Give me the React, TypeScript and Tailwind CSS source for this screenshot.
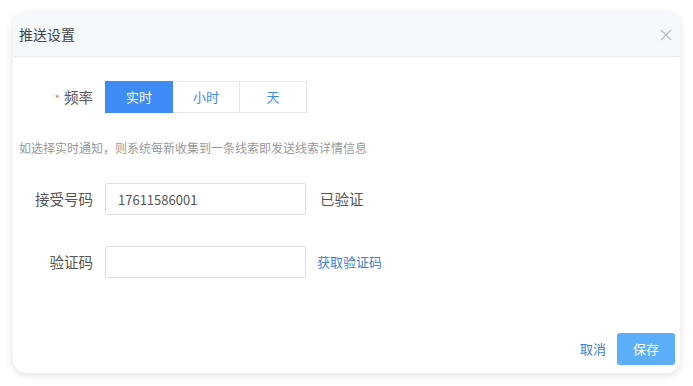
import { useState } from "react";

const FREQS = ["实时", "小时", "天"] as const;

const labelClass = "w-[80px] shrink-0 text-right text-[14.5px] text-[#555]";
const inputClass =
  "h-[32px] w-[201px] rounded-[2px] border border-[#dcdfe6] bg-white px-[12px] text-[13px] text-[#555] outline-none focus:border-[#409eff]";

export default function App() {
  const [freq, setFreq] = useState<string>("实时");
  const [phone, setPhone] = useState("17611586001");
  const [code, setCode] = useState("");

  return (
    <div
      className="h-[386px] w-[693px] bg-white pl-[13px] pt-[13px]"
      style={{ fontFamily: '"Noto Sans CJK SC", "Noto Sans", sans-serif' }}
    >
      <div className="flex h-[360px] w-[667px] flex-col overflow-hidden rounded-[14px] bg-white shadow-[0_2px_10px_rgba(0,0,0,0.12)]">
        {/* header */}
        <div className="flex h-[44px] shrink-0 items-center justify-between border-b border-[#e8ecf0] bg-[#f5f9fc] pl-[6px] pr-[8px]">
          <span className="text-[14px] text-[#444]">推送设置</span>
          <button type="button" className="text-[#b8bcc2]">
            <svg width="12" height="12" viewBox="0 0 12 12" fill="none" stroke="currentColor" strokeWidth="1.2">
              <path d="M1 1L11 11M11 1L1 11" />
            </svg>
          </button>
        </div>

        {/* body */}
        <div className="flex flex-1 flex-col pt-[24px]">
          <div className="flex items-center gap-[12px]">
            <label className={labelClass}>
              <span className="mr-[4px] text-[11px] text-[#f56c6c]">*</span>频率
            </label>
            <div className="flex">
              {FREQS.map((f, i) => (
                <button
                  key={f}
                  type="button"
                  onClick={() => setFreq(f)}
                  className={`h-[32px] w-[68px] border text-[13px] ${i > 0 ? "-ml-px" : ""} ${
                    freq === f
                      ? "relative border-[#3e8bf6] bg-[#3e8bf6] text-white"
                      : "border-[#e4e7ed] bg-white text-[#3e8bf6]"
                  }`}
                >
                  {f}
                </button>
              ))}
            </div>
          </div>

          <p className="mt-[26px] pl-[6px] text-[12px] text-[#999]">
            如选择实时通知，则系统每新收集到一条线索即发送线索详情信息
          </p>

          <div className="mt-[26px] flex items-center gap-[12px]">
            <label className={labelClass}>接受号码</label>
            <input value={phone} onChange={(e) => setPhone(e.target.value)} className={inputClass} />
            <span className="ml-[2px] text-[14.5px] text-[#555]">已验证</span>
          </div>

          <div className="mt-[31px] flex items-center gap-[12px]">
            <label className={labelClass}>验证码</label>
            <input value={code} onChange={(e) => setCode(e.target.value)} className={inputClass} />
            <a className="-ml-[1px] cursor-pointer text-[13px] text-[#3a7fd5]">获取验证码</a>
          </div>

          <div className="mt-auto flex items-center justify-end gap-[11px] pb-[8px] pr-[5px]">
            <button type="button" className="text-[13px] text-[#3a7fd5]">
              取消
            </button>
            <button
              type="button"
              className="h-[32px] w-[58px] rounded-[3px] bg-[#5cadfa] text-[13px] text-white"
            >
              保存
            </button>
          </div>
        </div>
      </div>
    </div>
  );
}
